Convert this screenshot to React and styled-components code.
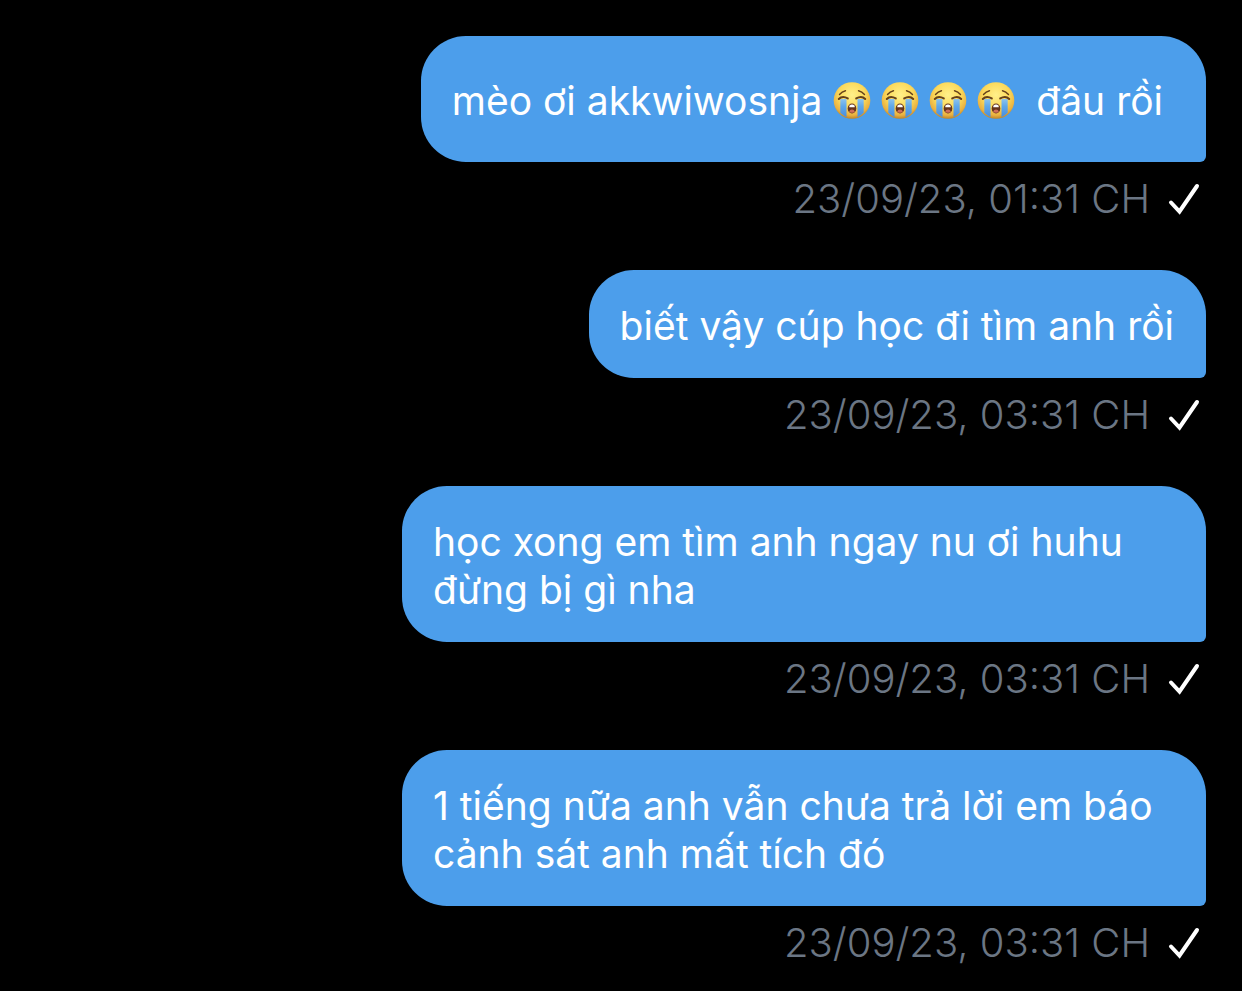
import React from "react";
import styled, { createGlobalStyle } from "styled-components";

const GlobalStyle = createGlobalStyle`
  *, *::before, *::after { box-sizing: border-box; }
  body {
    margin: 0;
    background: #000;
    color: #fff;
    font-family: Inter, "Liberation Sans", sans-serif;
    -webkit-font-smoothing: antialiased;
  }
`;

const Thread = styled.main`
  padding: 36px 36px 22px;
`;

const MessageList = styled.ol`
  display: flex;
  flex-direction: column;
  gap: 47px;
  margin: 0;
  padding: 0;
  list-style: none;
`;

const Message = styled.li`
  display: flex;
  flex-direction: column;
  align-items: flex-end;
  gap: 13px;
`;

const Bubble = styled.p`
  max-width: min(100%, 804px);
  margin: 0;
  padding: 32px 32px 28px 31px;
  border-radius: 45px 45px 6px 45px;
  background: #4c9eeb;
  font-size: 39px;
  line-height: ${({ $tall }) => ($tall ? "66px" : "48px")};
`;

const Meta = styled.div`
  display: flex;
  align-items: center;
  gap: 18px;
  padding-right: 6px;
`;

const Timestamp = styled.time`
  color: #6b7684;
  font-size: 40px;
  font-weight: 350;
  line-height: 48px;
`;

const CheckIcon = styled.svg`
  width: 32px;
  height: 32px;
  flex: none;
`;

const EmojiIcon = styled.svg`
  width: 38px;
  height: 38px;
  margin: 0 10px 0 0;
  vertical-align: -5px;
`;

function Check() {
  return (
    <CheckIcon viewBox="0 0 32 32" role="img" aria-label="Sent" fill="none">
      <path
        d="M3 19.500 11.500 28.500 29 3"
        stroke="#fff"
        strokeWidth="4"
        strokeLinecap="round"
        strokeLinejoin="miter"
      />
    </CheckIcon>
  );
}

function CryingFace() {
  return (
    <EmojiIcon viewBox="0 0 38 38" role="img" aria-label="Loudly crying face">
      <defs>
        <radialGradient id="face" cx="50%" cy="35%" r="65%">
          <stop offset="0" stopColor="#fff08a" />
          <stop offset="0.55" stopColor="#fcd95a" />
          <stop offset="0.85" stopColor="#e9b040" />
          <stop offset="1" stopColor="#bd8428" />
        </radialGradient>
        <linearGradient id="tear" x1="0" y1="0" x2="0" y2="1">
          <stop offset="0" stopColor="#8cc4ee" />
          <stop offset="0.4" stopColor="#5fa8ea" />
          <stop offset="1" stopColor="#468de0" />
        </linearGradient>
      </defs>
      <circle cx="19" cy="18.5" r="18.3" fill="url(#face)" />
      <path
        d="M7.300 17h6.200v18.200q-3.200-1.500-6.200-4.500ZM24.500 17h6.200v13.700q-3 3-6.200 4.500Z"
        fill="url(#tear)"
      />
      <g fill="none" stroke="#65401a" strokeLinecap="round">
        <path d="M6.500 12.500q2.500-3 6-3.800M31.500 12.500q-2.500-3-6-3.800" strokeWidth="1.400" />
        <path d="M5.800 17q3.500-3.600 9-.6M32.200 17q-3.500-3.600-9-.6" strokeWidth="2" />
      </g>
      <ellipse cx="19" cy="26.500" rx="4.300" ry="4.900" fill="#65351b" />
      <path d="M16.300 23.800q2.700-2.400 5.400 0v1.400h-5.400Z" fill="#fff" />
      <ellipse cx="19" cy="29.200" rx="2.500" ry="1.600" fill="#cf6c58" />
    </EmojiIcon>
  );
}

const messages = [
  {
    id: 1,
    tall: true,
    body: (
      <>
        mèo ơi akkwiwosnja <CryingFace />
        <CryingFace />
        <CryingFace />
        <CryingFace />
        {" "}đâu rồi{"\u00a0"}
      </>
    ),
    time: "23/09/23, 01:31 CH",
    dateTime: "2023-09-23T13:31",
  },
  {
    id: 2,
    body: "biết vậy cúp học đi tìm anh rồi",
    time: "23/09/23, 03:31 CH",
    dateTime: "2023-09-23T15:31",
  },
  {
    id: 3,
    body: "học xong em tìm anh ngay nu ơi huhu đừng bị gì nha",
    time: "23/09/23, 03:31 CH",
    dateTime: "2023-09-23T15:31",
  },
  {
    id: 4,
    body: "1 tiếng nữa anh vẫn chưa trả lời em báo cảnh sát anh mất tích đó",
    time: "23/09/23, 03:31 CH",
    dateTime: "2023-09-23T15:31",
  },
];

export default function App() {
  return (
    <>
      <GlobalStyle />
      <Thread>
        <MessageList>
          {messages.map(({ id, tall, body, time, dateTime }) => (
            <Message key={id}>
              <Bubble $tall={tall}>{body}</Bubble>
              <Meta>
                <Timestamp dateTime={dateTime}>{time}</Timestamp>
                <Check />
              </Meta>
            </Message>
          ))}
        </MessageList>
      </Thread>
    </>
  );
}
